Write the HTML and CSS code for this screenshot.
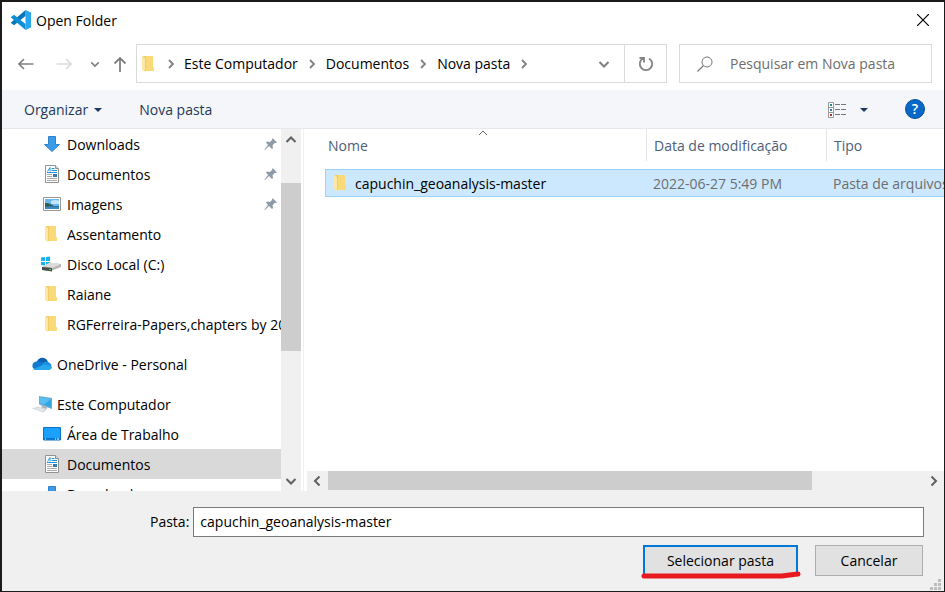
FILE: index.html
```html
<!DOCTYPE html>
<html lang="pt-BR">
<head>
<meta charset="utf-8">
<title>Open Folder</title>
<link rel="stylesheet" href="styles.css">
</head>
<body>
<svg class="defs" aria-hidden="true">
  <defs>
    <symbol id="folder" viewBox="0 0 14 18">
      <path d="M2 1h10v11l1 1v3H3z" fill="#f0cb66"/>
      <path d="M5 1h7v11l1 1v3H5z" fill="#f9d978"/>
      <path d="M1 1l3 2v14l-3-2z" fill="#fde7a5"/>
    </symbol>
    <symbol id="download" viewBox="0 0 18 18">
      <path d="M5.500 1.500h7v8h4L9 16.500 1.500 9.500h4z" fill="#3b9be8" stroke="#2f83cd"/>
    </symbol>
    <symbol id="doc" viewBox="0 0 18 20">
      <path d="M2.500 1.500h10l3 3v14h-13z" fill="#fff" stroke="#929292"/>
      <path d="M12.500 1.500v3h3" fill="#ddd" stroke="#929292"/>
      <path d="M4.500 7.500L7 3.500v4M8.500 4.500h3M8.500 6.500h5.500M4 8.500h10" stroke="#2196dc" fill="none"/>
      <path d="M4 10.500h5M4 12.500h5M4 14.500h10M4 16.500h10" stroke="#aaa"/>
      <path d="M10 10h4v3h-4z" fill="#347bb5"/>
    </symbol>
    <symbol id="image" viewBox="0 0 18 14">
      <path d="M.5.500h17v13H.5z" fill="#fff" stroke="#999"/>
      <path d="M2 2h14v10H2z" fill="#6db8ee"/>
      <path d="M8 4q5-2 8 0v3H8z" fill="#c4e4f9"/>
      <path d="M2 6q6 0 9 3h5v3H2z" fill="#2b6c86"/>
      <path d="M2 10q7-1 14 0v2H2z" fill="#3c87c0"/>
      <path d="M2 6q4 0 7 3H2z" fill="#325d46"/>
    </symbol>
    <symbol id="disk" viewBox="0 0 20 16">
      <path d="M0 1.500L4 1v4H0zM5 1l4-.5V5H5zM0 6h4v3.500L0 9zM5 6h4v4l-4-.4z" fill="#12b5ee"/>
      <path d="M1 11l8-4 11 1v3l-10 4-8-1z" fill="#b7b7b7"/>
      <path d="M2 10l7-3.500L20 8l-9 4z" fill="#dcdcdc"/>
      <path d="M1 11l10 1v3.500L1 14z" fill="#494d49"/>
      <path d="M8 13h2v1H8z" fill="#3be04c"/>
    </symbol>
    <symbol id="cloud" viewBox="0 0 20 14">
      <path d="M5 4.500C7-.5 14-.5 16 5l-6 4-8 1z" fill="#0b61b7"/>
      <path d="M4.500 4.500C7 4 8.500 5 10 6l5 7H4.500C-1 12.500-1 5 4.500 4.500z" fill="#1279d0"/>
      <path d="M10 6.500c4-3.500 9-1 9.500 2.500L12 10z" fill="#1791df"/>
      <path d="M1.500 12L12 7.500l7.500 1.500c1 2-.5 4-3 4h-12q-2 0-3-1z" fill="#28a7ea"/>
    </symbol>
    <symbol id="pc" viewBox="0 0 20 18">
      <path d="M7 1l13 2v11L7 9.500z" fill="#75aacb"/>
      <path d="M8 2l11 2v8.500L8 8.500z" fill="#35a6e4"/>
      <path d="M8 2l11 2-7 5.500-4-1z" fill="#58bdf2"/>
      <path d="M0 13.500l6-2 9 3-4 3z" fill="#d2d5d8"/>
      <path d="M2 13.500l4-1 7 2-3 2z" fill="#e4e6e8"/>
      <path d="M9 10l6 2v2l-5-1z" fill="#b0b7bc"/>
    </symbol>
    <symbol id="desktop" viewBox="0 0 18 14">
      <path d="M.5.500h17v12.500H.5z" fill="#1ba1fb" stroke="#0872c4"/>
      <path d="M1 11h16v1.500H1z" fill="#0b6fc0"/>
      <path d="M2 12h1M12 12h1M14 12h2" stroke="#fff"/>
    </symbol>
    <symbol id="pin" viewBox="0 0 14 14">
      <path d="M8.500 1L13 5.500l-1.500.5-1 0-2 2.500.5 2.500-1 1-3-3L1 13l-.5-.5L4 8 2 5.500l1-1 3 .5 2-2z" fill="#8e9aa5"/>
    </symbol>
    <symbol id="right" viewBox="0 0 10 10">
      <path d="M3 1l4 4-4 4" fill="none" stroke="currentColor" stroke-width="1.800"/>
    </symbol>
    <symbol id="down" viewBox="0 0 12 12">
      <path d="M1.500 4L6 8.500 10.500 4" fill="none" stroke="currentColor" stroke-width="2"/>
    </symbol>
    <symbol id="up" viewBox="0 0 12 12">
      <path d="M1.500 9L6 4.500 10.500 9" fill="none" stroke="currentColor" stroke-width="2"/>
    </symbol>
    <symbol id="left" viewBox="0 0 12 12">
      <path d="M8.500 1.500L4 6l4.500 4.500" fill="none" stroke="currentColor" stroke-width="2"/>
    </symbol>
    <symbol id="caret" viewBox="0 0 8 4"><path d="M0 0h8L4 4z" fill="#1e3760"/></symbol>
  </defs>
</svg>

<div class="window">
  <header class="titlebar">
    <svg class="logo" viewBox="0 0 20 20" aria-hidden="true">
      <path d="M14.500 0L20 2.500v15L14.500 20z" fill="#27a7f2"/>
      <path d="M14.500 0v6L3 15.200 0 13l0-.5z" fill="#0876b9"/>
      <path d="M14.500 20v-6L3 4.800 0 7v.5z" fill="#0d8fd8"/>
    </svg>
    <h1 class="title">Open Folder</h1>
    <button class="close" aria-label="Fechar">
      <svg width="12" height="12" viewBox="0 0 12 12"><path d="M0 0l12 12M12 0L0 12" stroke="#000" stroke-width="1.200"/></svg>
    </button>
  </header>

  <nav class="navbar">
    <div class="history">
      <button class="nav-btn" aria-label="Voltar"><svg width="16" height="12" viewBox="0 0 16 12"><path d="M15.500 6H1.500M6 1L1 6l5 5" fill="none" stroke="#808080" stroke-width="1.600"/></svg></button>
      <button class="nav-btn" aria-label="Avançar" disabled><svg width="16" height="12" viewBox="0 0 16 12"><path d="M.5 6h14M10 1l5 5-5 5" fill="none" stroke="#dcdcdc" stroke-width="1.600"/></svg></button>
      <button class="nav-btn recent" aria-label="Locais recentes"><svg width="10" height="10"><use href="#down"/></svg></button>
      <button class="nav-btn parent" aria-label="Acima"><svg width="14" height="16" viewBox="0 0 14 16"><path d="M7 16V2M1.500 7.500L7 2l5.500 5.500" fill="none" stroke="#808080" stroke-width="1.800"/></svg></button>
    </div>
    <div class="address">
      <svg class="address-folder" width="14" height="18"><use href="#folder"/></svg>
      <svg class="sep" width="10" height="10"><use href="#right"/></svg>
      <a class="crumb" href="#">Este Computador</a>
      <svg class="sep" width="10" height="10"><use href="#right"/></svg>
      <a class="crumb" href="#">Documentos</a>
      <svg class="sep" width="10" height="10"><use href="#right"/></svg>
      <a class="crumb" href="#">Nova pasta</a>
      <svg class="sep" width="10" height="10"><use href="#right"/></svg>
      <button class="address-drop" aria-label="Locais anteriores"><svg width="12" height="12"><use href="#down"/></svg></button>
      <button class="refresh" aria-label="Atualizar">
        <svg width="16" height="16" viewBox="0 0 16 16"><path d="M11 2.500A6.200 6.200 0 1 1 5 2.500M1.500 2h4.500v4.500" fill="none" stroke="#858585" stroke-width="1.800"/></svg>
      </button>
    </div>
    <label class="search">
      <svg width="16" height="16" viewBox="0 0 16 16" aria-hidden="true"><circle cx="10" cy="6" r="5" fill="none" stroke="#777"/><path d="M6.500 9.500L.5 15.500" stroke="#777" stroke-width="1.200"/></svg>
      <input type="text" aria-label="Pesquisar" placeholder="Pesquisar em Nova pasta">
    </label>
  </nav>

  <div class="toolbar">
    <button class="tool">Organizar <svg width="8" height="4"><use href="#caret"/></svg></button>
    <button class="tool">Nova pasta</button>
    <button class="tool view" aria-label="Modo de exibição">
      <svg width="18" height="16" viewBox="0 0 18 16"><path d="M.5.500h5v15h-5zM.5 5.500h5M.5 10.500h5" fill="#fff" stroke="#999"/><path d="M7 2.500h5M13 2.500h5M7 7.500h5M13 7.500h5M7 12.500h5M13 12.500h5" stroke="#777"/><path d="M2 2h2v2H2z" fill="#2a8a87"/><path d="M2 7h2v2H2z" fill="#3478c6"/><path d="M2 12h2v2H2z" fill="#c72e16"/></svg>
      <svg width="8" height="4"><use href="#caret"/></svg>
    </button>
    <button class="help" aria-label="Ajuda">?</button>
  </div>

  <main class="panes">
    <aside class="sidebar">
      <ul class="tree">
        <li class="item"><svg width="18" height="18"><use href="#download"/></svg><span class="name">Downloads</span><svg class="pin" width="14" height="14"><use href="#pin"/></svg></li>
        <li class="item"><svg width="18" height="20"><use href="#doc"/></svg><span class="name">Documentos</span><svg class="pin" width="14" height="14"><use href="#pin"/></svg></li>
        <li class="item"><svg width="18" height="14"><use href="#image"/></svg><span class="name">Imagens</span><svg class="pin" width="14" height="14"><use href="#pin"/></svg></li>
        <li class="item"><svg class="folder" width="14" height="18"><use href="#folder"/></svg><span class="name">Assentamento</span></li>
        <li class="item"><svg class="disk" width="20" height="16"><use href="#disk"/></svg><span class="name">Disco Local (C:)</span></li>
        <li class="item"><svg class="folder" width="14" height="18"><use href="#folder"/></svg><span class="name">Raiane</span></li>
        <li class="item"><svg class="folder" width="14" height="18"><use href="#folder"/></svg><span class="name">RGFerreira-Papers,chapters by 2022</span></li>
        <li class="item root"><svg width="20" height="14"><use href="#cloud"/></svg><span class="name">OneDrive - Personal</span></li>
        <li class="item root"><svg width="20" height="18"><use href="#pc"/></svg><span class="name">Este Computador</span></li>
        <li class="item"><svg width="18" height="14"><use href="#desktop"/></svg><span class="name">Área de Trabalho</span></li>
        <li class="item selected"><svg width="18" height="20"><use href="#doc"/></svg><span class="name">Documentos</span></li>
        <li class="item"><svg width="18" height="18"><use href="#download"/></svg><span class="name">Downloads</span></li>
      </ul>
      <div class="vscroll">
        <button class="scroll-btn" aria-label="Rolar para cima"><svg width="12" height="12"><use href="#up"/></svg></button>
        <div class="vtrack"><div class="thumb"></div></div>
        <button class="scroll-btn" aria-label="Rolar para baixo"><svg width="12" height="12"><use href="#down"/></svg></button>
      </div>
    </aside>

    <section class="files">
      <svg class="sort" width="10" height="6" viewBox="0 0 10 6" aria-hidden="true"><path d="M1 5l4-4 4 4" fill="none" stroke="#666"/></svg>
      <div class="list">
        <table class="table">
          <colgroup><col class="col-name"><col class="col-date"><col class="col-type"></colgroup>
          <thead>
            <tr><th><div class="head">Nome</div></th><th><div class="head">Data de modificação</div></th><th><div class="head">Tipo</div></th></tr>
          </thead>
          <tbody>
            <tr><td><div class="file"><svg width="14" height="18"><use href="#folder"/></svg><span class="name">capuchin_geoanalysis-master</span></div></td><td>2022-06-27 5:49 PM</td><td>Pasta de arquivos</td></tr>
          </tbody>
        </table>
      </div>
      <div class="hscroll">
        <button class="scroll-btn" aria-label="Rolar para a esquerda"><svg width="12" height="12"><use href="#left"/></svg></button>
        <div class="htrack"><div class="thumb"></div></div>
        <button class="scroll-btn" aria-label="Rolar para a direita"><svg width="12" height="12" viewBox="0 0 12 12"><path d="M3.500 1.500L8 6l-4.500 4.500" fill="none" stroke="currentColor" stroke-width="2"/></svg></button>
      </div>
    </section>
  </main>

  <footer class="footer">
    <div class="field">
      <label for="folder-name">Pasta:</label>
      <input id="folder-name" type="text" value="capuchin_geoanalysis-master">
    </div>
    <div class="actions">
      <div class="primary">
        <button class="btn btn-default">Selecionar pasta</button>
        <svg class="mark" viewBox="0 0 160 8" aria-hidden="true"><path d="M3 5h138q7-1 16-2" fill="none" stroke="#e81a1f" stroke-width="5" stroke-linecap="round" stroke-linejoin="round"/></svg>
      </div>
      <button class="btn">Cancelar</button>
    </div>
    <svg class="grip" width="12" height="12" viewBox="0 0 12 12" aria-hidden="true"><path d="M8 0h3v3H8zM4 4h3v3H4zM8 4h3v3H8zM0 8h3v3H0zM4 8h3v3H4zM8 8h3v3H8z" fill="#bdbdbd"/></svg>
  </footer>
</div>
</body>
</html>
```
FILE: styles.css
```css
* {
  box-sizing: border-box;
}

body {
  margin: 0;
  font: 14px/20px "Open Sans", "Noto Sans", sans-serif;
  color: #000;
}

button,
input {
  font: inherit;
  color: inherit;
  margin: 0;
  padding: 0;
  border: 0;
  background: none;
}

svg {
  display: block;
  flex: none;
}

.defs {
  position: absolute;
  width: 0;
  height: 0;
}

.window {
  display: flex;
  flex-direction: column;
  height: 100vh;
  border: 1px solid #1c1a1b;
  border-top-width: 2px;
  border-left-width: 2px;
  background: #fff;
  overflow: hidden;
}

/* Title bar */

.titlebar {
  display: flex;
  align-items: center;
  gap: 5px;
  height: 36px;
  padding: 0 15px 0 9px;
}

.logo {
  width: 20px;
  height: 20px;
}

.title {
  flex: 1;
  margin: 0;
  padding-top: 1px;
  font-size: 14px;
  font-weight: 400;
}

/* Navigation */

.navbar {
  display: flex;
  gap: 12px;
  padding: 6px 12px 7px 16px;
}

.history {
  display: flex;
  align-items: center;
  width: 106px;
}

.nav-btn {
  display: flex;
  color: #808080;
}

.nav-btn + .nav-btn {
  margin-left: 22px;
}

.nav-btn + .recent {
  margin-left: 18px;
}

.nav-btn + .parent {
  margin-left: 13px;
}

.address {
  display: flex;
  align-items: center;
  flex: 1;
  height: 39px;
  border: 1px solid #d9d9d9;
}

.address-folder {
  margin: 0 5px 0 4px;
}

.sep {
  margin: 0 9px;
  color: #808080;
}

.address-folder + .sep {
  margin: 0 8px 0 6px;
}

.crumb {
  color: inherit;
  text-decoration: none;
  white-space: nowrap;
}

.address-drop {
  margin-left: auto;
  padding: 0 14px;
  color: #808080;
}

.refresh {
  display: flex;
  align-items: center;
  justify-content: center;
  align-self: stretch;
  width: 42px;
  border-left: 1px solid #d9d9d9;
}

.search {
  display: flex;
  align-items: center;
  gap: 17px;
  width: 253px;
  padding-left: 17px;
  border: 1px solid #d9d9d9;
}

.search input {
  flex: 1;
  min-width: 0;
  outline: 0;
}

.search input::placeholder {
  color: #6d6d6d;
  opacity: 1;
}

/* Toolbar */

.toolbar {
  display: flex;
  align-items: center;
  height: 39px;
  padding: 0 19px 0 22px;
  border-bottom: 1px solid #e5e8ec;
  background: #f4f6f9;
  color: #1e395b;
}

.tool {
  display: flex;
  align-items: center;
  gap: 6px;
  margin-right: 37px;
  padding-top: 1px;
}

.view {
  gap: 14px;
  margin-left: auto;
}

.help {
  width: 20px;
  height: 20px;
  border: 1px solid #0a4f9b;
  border-radius: 50%;
  background: #0868c7;
  color: #fff;
  font-weight: 600;
  line-height: 18px;
}

/* Folder tree and file list */

.panes {
  display: flex;
  flex: 1;
  min-height: 0;
}

.sidebar {
  display: flex;
  width: 302px;
  padding-right: 2px;
  border-right: 1px solid #f0f0f0;
}

.tree {
  flex: 1;
  min-width: 0;
  margin: 0;
  padding: 0;
  list-style: none;
  overflow: hidden;
}

.item {
  display: flex;
  align-items: center;
  gap: 6px;
  height: 30px;
  padding-left: 41px;
}

.root {
  gap: 5px;
  margin: 10px 0;
  padding-left: 30px;
}

.root + .item:not(.root) {
  margin-top: -10px;
}

.selected {
  background: #d9d9d9;
}

.name {
  flex: 1;
  min-width: 0;
  padding-top: 2px;
  overflow: hidden;
  white-space: nowrap;
}

.folder {
  margin: 0 3px 0 1px;
}

.disk {
  margin-left: -2px;
}

.pin {
  margin-right: 3px;
}

.vscroll {
  display: flex;
  flex-direction: column;
  width: 20px;
  background: #f0f0f0;
}

.vtrack {
  display: grid;
  flex: 1;
  grid-template-rows: 34fr 167fr 120fr;
}

.vtrack .thumb {
  grid-row: 2;
}

.thumb {
  background: #cdcdcd;
}

.scroll-btn {
  display: flex;
  align-items: center;
  justify-content: center;
  width: 20px;
  height: 20px;
  color: #606060;
}

.files {
  display: flex;
  flex: 1;
  flex-direction: column;
  position: relative;
  min-width: 0;
}

.sort {
  position: absolute;
  top: 1px;
  left: 174px;
}

.list {
  flex: 1;
  min-height: 0;
  padding-left: 21px;
  overflow: hidden;
}

.table {
  width: 680px;
  table-layout: fixed;
  border-collapse: separate;
  border-spacing: 0;
}

.col-name {
  width: 321px;
}

.col-date {
  width: 180px;
}

.col-type {
  width: 179px;
}

th,
td {
  padding: 0;
  text-align: left;
  font-weight: 400;
  white-space: nowrap;
}

th {
  height: 40px;
  vertical-align: top;
  color: #4c607a;
}

.head {
  height: 32px;
  padding-left: 7px;
  border-left: 1px solid #e5e5e5;
  line-height: 34px;
}

th:first-child .head {
  padding-left: 3px;
  border-left: 0;
}

td {
  height: 28px;
  padding: 2px 0 0 7px;
  border: solid #99d1ff;
  border-width: 1px 0;
  background: #cce8ff;
  color: #6d6d6d;
}

td:first-child {
  padding-top: 0;
  border-left-width: 1px;
  color: #000;
}

.file {
  display: flex;
  align-items: center;
  gap: 8px;
}

.hscroll {
  display: flex;
  height: 20px;
  margin-left: 3px;
  background: #f0f0f0;
}

.htrack {
  display: grid;
  flex: 1;
  grid-template-columns: 484fr 112fr;
  padding: 0 0 1px 1px;
}

/* Footer */

.footer {
  position: relative;
  padding: 16px 20px 15px;
  background: #f0f0f0;
}

.field {
  display: flex;
  align-items: center;
  gap: 4px;
  padding-left: 128px;
}

.field input {
  flex: 1;
  height: 30px;
  padding: 0 6px 2px;
  border: 1px solid #7a7a7a;
  background: #fff;
}

.actions {
  display: flex;
  justify-content: flex-end;
  gap: 17px;
  margin: 8px 1px 0 0;
}

.primary {
  position: relative;
}

.btn {
  width: 108px;
  height: 31px;
  border: 1px solid #adadad;
  background: #e1e1e1;
}

.btn-default {
  display: block;
  width: 155px;
  border: 2px solid #0078d7;
}

.mark {
  position: absolute;
  bottom: -3px;
  left: -2px;
  width: 160px;
  height: 8px;
}

.grip {
  position: absolute;
  right: 2px;
  bottom: 0;
}
```
